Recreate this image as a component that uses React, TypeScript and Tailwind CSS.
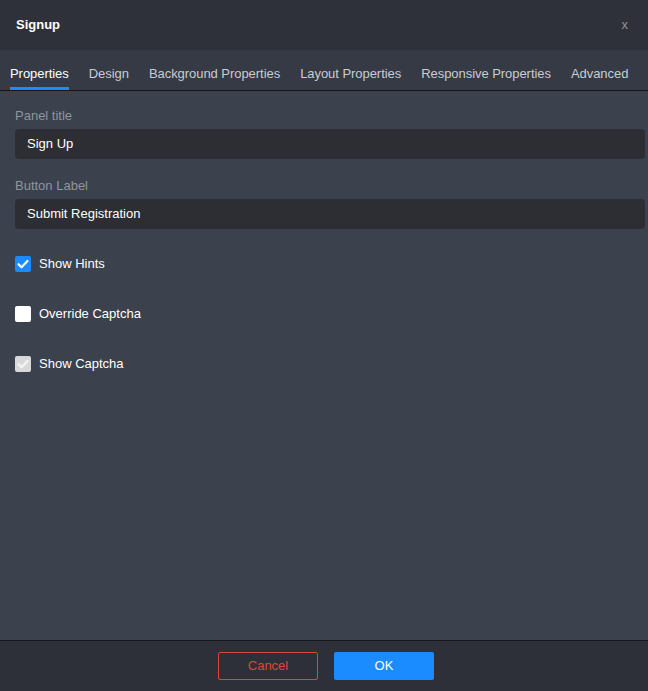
import { useState } from "react";

const tabs = [
  "Properties",
  "Design",
  "Background Properties",
  "Layout Properties",
  "Responsive Properties",
  "Advanced",
];

const Check = ({ color }: { color: string }) => (
  <svg viewBox="0 0 16 16" className="w-4 h-4">
    <path d="M3.5 8.2l3 3 6-6.2" fill="none" stroke={color} strokeWidth="2.2" strokeLinecap="round" strokeLinejoin="round" />
  </svg>
);

const App = () => {
  const [active, setActive] = useState(0);
  const [hints, setHints] = useState(true);
  const [override, setOverride] = useState(false);

  return (
    <div
      className="w-[648px] h-[691px] flex flex-col bg-[#3b414d] text-[13px] text-white overflow-hidden"
      style={{ fontFamily: '"Liberation Sans", Arial, sans-serif' }}
    >
      <div className="h-[50px] shrink-0 flex items-center justify-between pl-4 pr-5 bg-[#2e3139]">
        <span className="font-bold text-[13px]">Signup</span>
        <span className="text-[#8c919a] text-[13px]">x</span>
      </div>

      <div className="h-[41px] shrink-0 flex items-stretch bg-[#353a45] border-b border-[#15171b]">
        {tabs.map((t, i) => (
          <button
            key={t}
            onClick={() => setActive(i)}
            className={`relative px-[10px] pt-[8px] tracking-[-0.05px] ${i === active ? "text-white" : "text-[#c9ccd2]"}`}
          >
            {t}
            {i === active && <span className="absolute left-[10px] right-[10px] bottom-0 h-[3px] bg-[#1a8cff]" />}
          </button>
        ))}
      </div>

      <div className="flex-1 pl-[15px] pr-[3px] pt-[17px]">
        <div className="text-[#8f959e] leading-[15px]">Panel title</div>
        <div className="mt-[6px] h-[30px] rounded-[4px] bg-[#2c2e33] flex items-center px-3">Sign Up</div>

        <div className="mt-[19px] text-[#8f959e] leading-[15px]">Button Label</div>
        <div className="mt-[6px] h-[30px] rounded-[4px] bg-[#2c2e33] flex items-center px-3">Submit Registration</div>

        <div className="mt-[26px] flex flex-col gap-[34px]">
          <label className="flex items-center gap-2 h-4 pt-px cursor-pointer" onClick={() => setHints(!hints)}>
            <span className={`w-4 h-4 rounded-[2px] flex items-center justify-center ${hints ? "bg-[#1a8cff]" : "bg-white"}`}>
              {hints && <Check color="#fff" />}
            </span>
            Show Hints
          </label>
          <label className="flex items-center gap-2 h-4 pt-px cursor-pointer" onClick={() => setOverride(!override)}>
            <span className={`w-4 h-4 rounded-[2px] flex items-center justify-center ${override ? "bg-[#1a8cff]" : "bg-white"}`}>
              {override && <Check color="#fff" />}
            </span>
            Override Captcha
          </label>
          <label className="flex items-center gap-2 h-4 pt-px">
            <span className="w-4 h-4 rounded-[2px] flex items-center justify-center bg-[#d9d9d9]">
              <Check color="#f4f4f4" />
            </span>
            Show Captcha
          </label>
        </div>
      </div>

      <div className="h-[51px] shrink-0 flex items-center justify-center gap-4 pl-[4px] bg-[#2d3039] border-t border-[#15171b]">
        <button className="w-[100px] h-[28px] rounded-[2px] border border-[#e0453a] text-[#e0453a]">Cancel</button>
        <button className="w-[100px] h-[28px] rounded-[2px] bg-[#1a8cff] text-white">OK</button>
      </div>
    </div>
  );
};

export default App;
